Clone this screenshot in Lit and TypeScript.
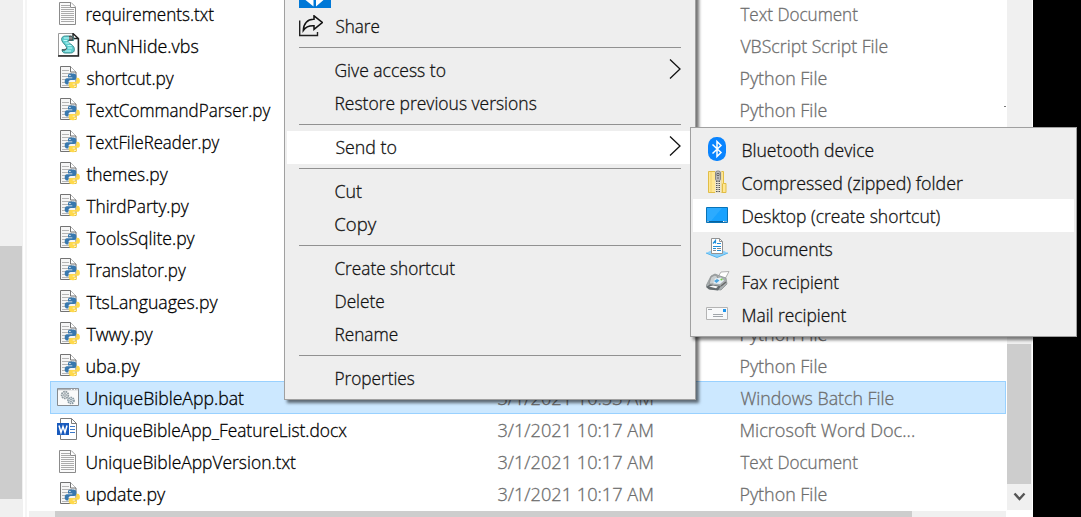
import { LitElement, html, svg, css, nothing } from "lit";
import { customElement, property, state } from "lit/decorators.js";

const FONT = '300 18px "Open Sans"';
let context: CanvasRenderingContext2D | null = null;

/* A single-line label whose glyph run is condensed to a given width. */
@customElement("fit-text")
class FitText extends LitElement {
  @property() text = "";
  @property({ type: Number }) size = 100;
  @state() private transform = "none";
  static styles = css`
    :host { display: block; white-space: pre; font: 300 18px "Open Sans", sans-serif; line-height: inherit; }
    .run { display: block; width: max-content; height: 28px; line-height: inherit; transform-origin: 0 50%; -webkit-text-stroke: 0.3px currentColor; }
  `;
  private fit() {
    context = context || document.createElement("canvas").getContext("2d")!;
    context.font = FONT;
    const m = context.measureText(this.text);
    const scale = this.size / (m.actualBoundingBoxRight + m.actualBoundingBoxLeft);
    this.transform = `translateX(${(m.actualBoundingBoxLeft * scale + 0.4).toFixed(2)}px) scaleX(${scale.toFixed(4)})`;
  }
  willUpdate() { this.fit(); }
  render() {
    return html`<span class="run" style="transform:${this.transform}">${this.text}</span>`;
  }
}

const pageLines = (x1: number, x2: number, ys: number[], c: string) =>
  ys.map((y) => svg`<path d="M${x1} ${y}H${x2}" stroke=${c}/>`);

const icons: Record<string, unknown> = {
  txt: svg`<path d="M2.5 1.5H14L18.500 6V23.500H2.500Z" fill="#fbfbfb" stroke="#8b8b8b"/>
    <path d="M13.500 1.500V6.500H18.500" fill="#fff" stroke="#8b8b8b"/>
    ${pageLines(4, 13, [4.5, 6.5], "#ababab")}
    ${pageLines(4, 17, [8.5, 10.5, 12.5, 14.5, 16.5, 18.5, 20.5], "#ababab")}`,
  py: svg`<path d="M3.500 1.500H13.500L19 7V22.500H3.500Z" fill="#f6f6f6" stroke="#737373"/>
    <path d="M13.500 1.500V7H19" fill="#fff" stroke="#737373"/>
    ${pageLines(5, 12, [5.5], "#b5b5b5")}${pageLines(5, 15, [8.5, 11.5, 14.5, 17.500, 20.5], "#b5b5b5")}
    <path d="M15 8.500c-3.300 0-4 .9-4 2.200V12.500h4.300v.8H10c-1.700 0-2.300 1.600-2.300 3.100 0 1.600.8 3 2.300 3h1.500v-2c0-1.400.9-2.300 2.300-2.300h3.500c1.200 0 2-.8 2-2v-2.400c0-1.600-1.600-2.200-4.300-2.200Z" fill="#3878ae"/>
    <path d="M16 23.300c3.200 0 4-.9 4-2.200v-1.500h-4.300v-.8H21c1.300 0 1.900-1.200 1.900-2.800s-.7-3.200-2.200-3.200h-1.200v2c0 1.400-.9 2.300-2.200 2.300h-3.400c-1.200 0-2.100.8-2.100 2v2.200c0 1.300 1.600 2 4.200 2Z" fill="#ffd94b"/>
    <circle cx="12.900" cy="10.400" r=".7" fill="#fff"/><circle cx="18" cy="21.400" r=".7" fill="#fff"/>`,
  vbs: svg`<path d="M1.500 .5H16L21 5.500V22.500H1.500Z" fill="#fff" stroke="#9a9a9a"/>
    <path d="M1 23H21.500V5.500L16 .5V5.500H21" fill="none" stroke="#222" stroke-width="1.400"/>
    <path d="M16.500 7.500c1-3-1-4.500-4-4.500H8.500C5.500 3 4 5 4.800 7.500c.9 2.700 4.200 4.500 4.700 7 .3 2-1.500 2-4.500 2 0 2 1 3.500 3 3.500h5.500c3.500 0 4.500-2.500 3.500-5.500S11 10.500 10.500 7.500Z" fill="#5ecfd0" stroke="#3b8a8c"/>
    <path d="M7 5h5M6.500 7.500h4M8.500 10h4M10.500 12.500h4M11 15h4M8 18h6" stroke="#c4fbfa" stroke-width="1.200"/>
    <path d="M12 3.500c3-1 4.500 1 3.500 3.500h-3.500M5 17c3 .5 4-.3 4.500-1.500" fill="#888" stroke="#444"/>`,
  bat: svg`<path d="M.5 3.500H21.500V20.500H.5Z" fill="#fafafa" stroke="#858b91"/>
    <path d="M1 4.500H21" stroke="#b0b5b9" stroke-width="1.500"/><path d="M14 4.500h1M17 4.500h1M19.500 4.500h1" stroke="#fff"/>
    <circle cx="8" cy="10" r="3.400" fill="#e3e7e9" stroke="#8e999f" stroke-width="1.700" stroke-dasharray="1.600 .7"/>
    <circle cx="8" cy="10" r="1.300" fill="#fff" stroke="#8e999f"/>
    <circle cx="14" cy="15.500" r="3" fill="#dce5ea" stroke="#8798a2" stroke-width="1.700" stroke-dasharray="1.500 .7"/>
    <circle cx="14" cy="15.500" r="1.100" fill="#fff" stroke="#8798a2"/>`,
  doc: svg`<path d="M3.500 1.500H14.500L19.500 6.500V22.500H3.500Z" fill="#fff" stroke="#7b7b7b"/>
    <path d="M14.500 1.500V6.500H19.500" fill="none" stroke="#7b7b7b"/>
    ${pageLines(13, 18, [9.5, 12.5, 15.5], "#3c78c8")}
    <rect y="6" width="12" height="12" fill="#185abd"/>
    <path d="M2 8.500 4 15.500 6 9.500 8 15.500 10 8.500" fill="none" stroke="#fff" stroke-width="1.500"/>`,
  bluetooth: svg`<rect x="2" y="0" width="18" height="24" rx="8.500" fill="#0a84fe"/>
    <path d="M6.500 7.500 15 15.500 11 19.500V4.500L15 8.500 6.500 16.500" fill="none" stroke="#fff" stroke-width="1.500"/>`,
  zip: svg`<path d="M2.500 1.500H17.500V13.500H20V22.500H2.500Z" fill="#ffe793" stroke="#e1bd46"/>
    <path d="M5 2V22M15.500 2V22" stroke="#f3d36c"/><path d="M16.500 22V14l1-1" fill="none" stroke="#e1bd46"/>
    <rect x="9" y="1" width="6.500" height="22" fill="#eee6ca"/>
    <path d="M12 9V23" stroke="#555" stroke-width="4" stroke-dasharray="1 1"/>
    <path d="M12 10V23" stroke="#ddd"/>
    <rect x="9.500" y="1" width="5" height="10" rx="2" fill="#bbb" stroke="#888"/><path d="M11 3.500h2v2h-2zM11 8h2" fill="#fff" stroke="#666"/>`,
  desktop: svg`<path d="M.5 4.500H21.500V19.500H.5Z" fill="#18a2ff" stroke="#0873b7"/>
    <path d="M1 5H16L5 18H1Z" fill="#38b0ff" opacity=".65"/><path d="M1 18.500H21" stroke="#07619d"/><path d="M1.500 18.500h1M17 18.500h1.500M19.500 18.500h1" stroke="#fff"/>`,
  documents: svg`<g transform="translate(0 2)"><path d="M0 15 6 12H16L22 15 11 19.500Z" fill="#8bd0fa"/><path d="M0 15 11 19.500 22 15" fill="none" stroke="#55b5ed"/>
    <path d="M5.500 .5H13.500L16.500 3.500V15.500H5.500Z" fill="#fff" stroke="#929292"/><path d="M13.500 .5V3.500H16.500" fill="none" stroke="#929292"/>
    <path d="M7 5.500 9.500 2.500V5.500M11 5.500h4M7 8.500h8M7 10.500h3M11 12.500h4" fill="none" stroke="#218fda" stroke-width="1.200"/>
    <path d="M7 12.500h3M11 10.500h4" stroke="#888"/></g>`,
  fax: svg`<g transform="translate(0 2)"><path d="M12 6 15 1 23 .5 19 8Z" fill="#fff" stroke="#b1b1b1"/>
    <path d="M0 15 5 5 9 3 14 5 20 7 21 13 15 19 4 18Z" fill="#a9afb1" stroke="#858b8d" stroke-width=".7"/>
    <path d="M5 6 9 4 12 6 7 13H3Z" fill="#c9ced0" stroke="#888" stroke-width=".7"/><path d="M9 7.500 15 6.500 18 9.500 14 13 7 12.500Z" fill="#e7f0f6"/>
    <path d="M8 10 11 8 13.500 9.500 10.500 12Z" fill="#4ba4df"/><circle cx="15.500" cy="8.500" r="1.100" fill="#73cf43"/>
    <path d="M0 16 4 13.500 15 15 12 19.500 3 18.500Z" fill="#646b6e"/><path d="M3 15.500 7 14.500 12 15.500 10 17.300Z" fill="#f7f7f7"/>
    <path d="M15 15 20 11" stroke="#666" stroke-width="1.500"/></g>`,
  mail: svg`<path d="M.5 5.500H21.500V17.500H.5Z" fill="#f8f9fa" stroke="#b4b4b4"/><path d="M2 7.500h4M7 12.500h10M7 14.500h10" stroke="#a0a5aa"/>
    <rect x="17" y="7" width="3" height="3" fill="#2196ed"/>`,
  share: svg`<path d="M.7 5.500V20.500H18.500V17" fill="none" stroke="#202020" stroke-width="1.400"/>
    <path d="M15 .8V4.300C8.500 4 4.500 8.500 4.300 15.500 7 11.500 10 10.500 15 10.800V14.300L23.300 7.500Z" fill="none" stroke="#111" stroke-width="1.500"/>`,
};

const glyph = (name: string) => html`<svg class="icon" viewBox="0 0 24 24">${icons[name]}</svg>`;

const DATE = "3/1/2021 10:17 AM";
const PY: [string, number] = ["Python File", 86];
const TX: [string, number] = ["Text Document", 117.5];
type Row = { icon: string; name: string; w: number; type: [string, number]; date?: string; selected?: boolean };
const rows: Row[] = [
  { icon: "txt", name: "requirements.txt", w: 127.5, type: TX },
  { icon: "vbs", name: "RunNHide.vbs", w: 112, type: ["VBScript Script File", 147] },
  { icon: "py", name: "shortcut.py", w: 88, type: PY },
  { icon: "py", name: "TextCommandParser.py", w: 184.5, type: PY },
  { icon: "py", name: "TextFileReader.py", w: 133.5, type: PY },
  { icon: "py", name: "themes.py", w: 82, type: PY },
  { icon: "py", name: "ThirdParty.py", w: 103, type: PY },
  { icon: "py", name: "ToolsSqlite.py", w: 109, type: PY },
  { icon: "py", name: "Translator.py", w: 100, type: PY },
  { icon: "py", name: "TtsLanguages.py", w: 132, type: PY },
  { icon: "py", name: "Twwy.py", w: 67, type: PY },
  { icon: "py", name: "uba.py", w: 54, type: PY },
  { icon: "bat", name: "UniqueBibleApp.bat", w: 157.5, type: ["Windows Batch File", 153], date: "3/1/2021 10:53 AM", selected: true },
  { icon: "doc", name: "UniqueBibleApp_FeatureList.docx", w: 260.5, type: ["Microsoft Word Doc...", 173.5] },
  { icon: "txt", name: "UniqueBibleAppVersion.txt", w: 209.5, type: TX },
  { icon: "py", name: "update.py", w: 79.5, type: PY },
];

type Item = { text: string; w: number; icon?: string; arrow?: boolean; hot?: boolean } | null;
const menu: Item[] = [
  { text: "Share", w: 43.5, icon: "share" },
  null,
  { text: "Give access to", w: 110, arrow: true },
  { text: "Restore previous versions", w: 201 },
  null,
  { text: "Send to", w: 61, arrow: true, hot: true },
  null,
  { text: "Cut", w: 26.5 },
  { text: "Copy", w: 41.5 },
  null,
  { text: "Create shortcut", w: 119.5 },
  { text: "Delete", w: 48.5 },
  { text: "Rename", w: 62 },
  null,
  { text: "Properties", w: 79 },
];
const sendTo: Item[] = [
  { text: "Bluetooth device", w: 131, icon: "bluetooth" },
  { text: "Compressed (zipped) folder", w: 220.5, icon: "zip" },
  { text: "Desktop (create shortcut)", w: 198, icon: "desktop", hot: true },
  { text: "Documents", w: 90, icon: "documents" },
  { text: "Fax recipient", w: 96.5, icon: "fax" },
  { text: "Mail recipient", w: 104, icon: "mail" },
];

@customElement("app-root")
class AppRoot extends LitElement {
  static styles = css`
    * { box-sizing: border-box; }
    :host { display: block; position: relative; width: 1081px; height: 517px; overflow: hidden; background: #fff; color: #000; }
    .window { display: grid; grid-template-columns: 23px 6px 977px 27px 1fr; height: 517px; }
    .nav { background: #f0f0f0; padding-top: 246px; }
    .nav-thumb { width: 22px; height: 253px; background: #cdcdcd; }
    .split { border-left: 2px solid #f5f5f5; margin-left: 2px; }
    .pane { display: grid; grid-template-rows: 511px 6px; overflow: hidden; min-width: 0; }
    .files { overflow: hidden; }
    .list { margin-top: -3px; }
    .row { display: grid; grid-template-columns: 36px 411px 243px 1fr; height: 32px; line-height: 32px; margin-left: 21px; padding-top: 1px; }
    .row .cell { color: #6d6d6d; margin-left: -0.4px; }
    .selected { background: #cce8ff; box-shadow: inset 0 0 0 1px #99d1ff; height: 33px; margin-bottom: -1px; }
    .row .icon { margin: 3px 0 0 7px; }
    .icon { display: block; width: 24px; height: 24px; }
    .hbar { background: #f0f0f0; padding-left: 26px; }
    .hthumb { width: 857px; height: 6px; background: #cdcdcd; }
    .vbar { margin: 0 1px 7px 1px; background: #f0f0f0; display: flex; flex-direction: column; padding-top: 344px; }
    .vthumb { width: 24px; height: 140px; background: #cdcdcd; }
    .down { width: 13px; height: 10px; margin: 8px 0 0 6px; }
    .outside { background: #000; }
    .menu { position: absolute; background: #eee; border: 1px solid #a0a0a0; color: #111; line-height: 33px; }
    .context { left: 284px; top: -26px; width: 412px; height: 426px; padding: 1px 2px; box-shadow: 3px 3px 3px rgba(0,0,0,.55); }
    .sendto { left: 690px; top: 127px; width: 387px; height: 210px; padding: 5px 2px; box-shadow: 3px 3px 3px rgba(0,0,0,.5); }
    .item { display: grid; grid-template-columns: 36px 1fr 13px; height: 33px; padding: 0 11px 0 12px; }
    .item .icon { margin-top: 5px; }
    .sendto .item { padding-left: 13px; line-height: 35px; }
    .sendto .icon { margin-top: 4px; }
    .sendto fit-text { margin-left: -0.5px; }
    .hot { background: #fff; }
    .sep { height: 11px; padding: 4px 12px 0; }
    .line { height: 1px; background: #919191; }
    .arrow { width: 13px; height: 20px; margin-top: 5px; }
    .app-item { height: 34px; padding: 0 0 0 12px; }
    .app-item svg { display: block; width: 32px; height: 32px; }
    .speck { position: absolute; left: 1004px; top: 106px; width: 2px; height: 1px; background: #777; }
  `;

  private row(r: Row) {
    return html`<div class="row ${r.selected ? "selected" : ""}">
      ${glyph(r.icon)}
      <fit-text .text=${r.name} .size=${r.w}></fit-text>
      <fit-text class="cell" .text=${r.date ?? DATE} .size=${155}></fit-text>
      <fit-text class="cell" .text=${r.type[0]} .size=${r.type[1]}></fit-text>
    </div>`;
  }

  private item(i: Item) {
    if (!i) return html`<div class="sep"><div class="line"></div></div>`;
    return html`<div class="item ${i.hot ? "hot" : ""}">
      ${i.icon ? glyph(i.icon) : html`<span></span>`}
      <fit-text .text=${i.text} .size=${i.w}></fit-text>
      ${i.arrow ? html`<svg class="arrow" viewBox="0 0 13 20"><path d="M1 .5 11 10 1 19.500" fill="none" stroke="#111" stroke-width="1.300"/></svg>` : nothing}
    </div>`;
  }

  render() {
    return html`
      <div class="window">
        <div class="nav"><div class="nav-thumb"></div></div>
        <div class="split"></div>
        <div class="pane">
          <div class="files"><div class="list">${rows.map((r) => this.row(r))}</div></div>
          <div class="hbar"><div class="hthumb"></div></div>
        </div>
        <div class="vbar">
          <div class="vthumb"></div>
          <svg class="down" viewBox="0 0 13 10"><path d="M1.500 1.500 6.500 7 11.500 1.500" fill="none" stroke="#555" stroke-width="2.400"/></svg>
        </div>
        <div class="outside"></div>
      </div>
      <div class="speck"></div>
      <div class="menu context">
        <div class="app-item">
          <svg viewBox="0 0 32 32"><rect width="32" height="32" fill="#0078d7"/><path d="M6.500 20V24L14.500 30.500V20ZM17 20V30.500L24.500 24V20Z" fill="#fff"/></svg>
        </div>
        ${menu.map((i) => this.item(i))}
      </div>
      <div class="menu sendto">${sendTo.map((i) => this.item(i))}</div>
    `;
  }
}
